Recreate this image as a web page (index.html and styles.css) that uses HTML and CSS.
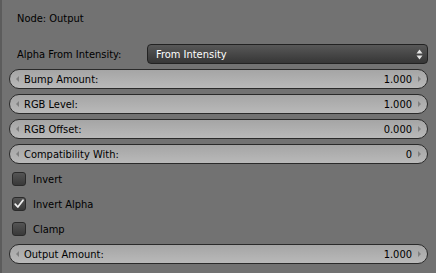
FILE: index.html
```html
<!DOCTYPE html>
<html lang="en">
<head>
    <meta charset="UTF-8">
    <title>Node: Output</title>
    <link rel="stylesheet" href="styles.css">
</head>
<body>
    <div class="panel">
        <div class="title">Node: Output</div>

        <div class="menu-row">
            <span class="menu-label">Alpha From Intensity:</span>
            <div class="menu">
                <span>From Intensity</span>
                <svg class="updown" width="7" height="11" viewBox="0 0 7 11">
                    <path d="M0.5 4.5 L3.5 0.5 L6.5 4.5 Z" fill="#e6e6e6"/>
                    <path d="M0.5 6.5 L3.5 10.5 L6.5 6.5 Z" fill="#e6e6e6"/>
                </svg>
            </div>
        </div>

        <div class="num"><i class="arr left"></i><span class="name">Bump Amount:</span><span class="val">1.000</span><i class="arr right"></i></div>
        <div class="num"><i class="arr left"></i><span class="name">RGB Level:</span><span class="val">1.000</span><i class="arr right"></i></div>
        <div class="num"><i class="arr left"></i><span class="name">RGB Offset:</span><span class="val">0.000</span><i class="arr right"></i></div>
        <div class="num"><i class="arr left"></i><span class="name">Compatibility With:</span><span class="val">0</span><i class="arr right"></i></div>

        <div class="check"><span class="box"></span>Invert</div>
        <div class="check"><span class="box on">
            <svg width="12" height="12" viewBox="0 0 12 12"><path d="M2.2 6.2 L4.8 9 L10 2.2" fill="none" stroke="#f0f0f0" stroke-width="1.8" stroke-linecap="round" stroke-linejoin="round"/></svg>
        </span>Invert Alpha</div>
        <div class="check"><span class="box"></span>Clamp</div>

        <div class="num"><i class="arr left"></i><span class="name">Output Amount:</span><span class="val">1.000</span><i class="arr right"></i></div>
    </div>
</body>
</html>
```

FILE: styles.css
```css
* {
    margin: 0;
    padding: 0;
    box-sizing: border-box;
}

body {
    background: #727272;
    font-family: "DejaVu Sans Condensed", "DejaVu Sans", sans-serif;
    font-stretch: condensed;
    font-size: 11px;
    color: #000;
}

.panel {
    height: 273px;
    border-left: 2px solid #5c5c5c;
    padding: 9px 8px 0 7px;
}

.title {
    height: 20px;
    line-height: 20px;
    padding-left: 8px;
}

.menu-row {
    display: flex;
    align-items: center;
    height: 20px;
    margin-top: 15px;
}

.menu-label {
    width: 138px;
    padding-left: 8px;
}

.menu {
    flex: 1;
    height: 20px;
    display: flex;
    align-items: center;
    justify-content: space-between;
    padding: 0 4px 0 8px;
    color: #fff;
    border: 1px solid #222;
    border-radius: 4px;
    background: linear-gradient(#585858, #363636);
}

.num {
    display: flex;
    align-items: center;
    height: 20px;
    margin-top: 5px;
    padding: 0 6px;
    border: 1px solid #2a2a2a;
    border-radius: 10px;
    background: linear-gradient(#a5a5a5, #b9b9b9);
}

.num .name {
    flex: 1;
    padding-left: 5px;
}

.num .val {
    padding-right: 6px;
}

.arr {
    width: 0;
    height: 0;
    border-top: 3px solid transparent;
    border-bottom: 3px solid transparent;
}

.arr.left {
    border-right: 3px solid #808080;
}

.arr.right {
    border-left: 3px solid #808080;
}

.check {
    display: flex;
    align-items: center;
    height: 20px;
    margin-top: 5px;
    padding-left: 3px;
}

.box {
    width: 14px;
    height: 14px;
    margin-right: 7px;
    border: 1px solid #2a2a2a;
    border-radius: 3px;
    background: linear-gradient(#555555, #393939);
    display: flex;
    align-items: center;
    justify-content: center;
}
```
